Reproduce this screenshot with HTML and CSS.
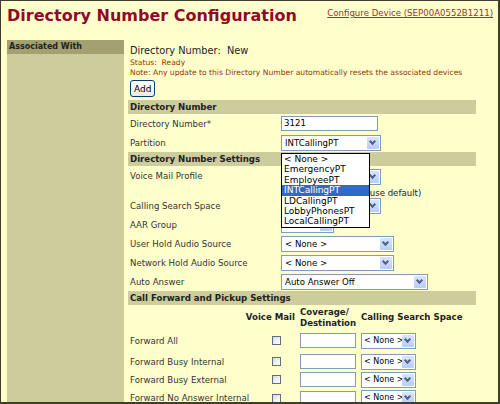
FILE: index.html
```html
<!DOCTYPE html>
<html lang="en">
<head>
    <meta charset="UTF-8">
    <title>Directory Number Configuration</title>
    <link rel="stylesheet" href="styles.css">
</head>
<body>
<div class="frame">
    <div class="top">
        <h1>Directory Number Configuration</h1>
        <a class="device-link" href="#">Configure Device (SEP00A0552B1211)</a>
    </div>
    <div class="layout">
        <div class="side">
            <div class="side-head">Associated With</div>
        </div>
        <div class="main">
            <div class="dn-title">Directory Number:&nbsp; New</div>
            <div class="status">Status:&nbsp; Ready</div>
            <div class="status">Note: Any update to this Directory Number automatically resets the associated devices</div>
            <button class="add">Add</button>

            <div class="section">Directory Number</div>
            <div class="row">
                <span class="label">Directory Number*</span>
                <span class="text-box w97">3121</span>
            </div>
            <div class="row">
                <span class="label">Partition</span>
                <span class="select w100">INTCallingPT<i class="arrow"></i></span>
            </div>

            <div class="section">Directory Number Settings</div>
            <div class="row tall">
                <span class="label">Voice Mail Profile</span>
                <span class="field-stack">
                    <span class="select w100">&lt; None &gt;<i class="arrow"></i></span>
                    <span class="hint">(Choose &lt;None&gt; to use default)</span>
                </span>
            </div>
            <div class="row">
                <span class="label">Calling Search Space</span>
                <span class="select w100">&lt; None &gt;<i class="arrow"></i></span>
            </div>
            <div class="row">
                <span class="label">AAR Group</span>
                <span class="select w53">&lt; None &gt;<i class="arrow"></i></span>
            </div>
            <div class="row">
                <span class="label">User Hold Audio Source</span>
                <span class="select w113">&lt; None &gt;<i class="arrow"></i></span>
            </div>
            <div class="row">
                <span class="label">Network Hold Audio Source</span>
                <span class="select w113">&lt; None &gt;<i class="arrow"></i></span>
            </div>
            <div class="row">
                <span class="label">Auto Answer</span>
                <span class="select w147">Auto Answer Off<i class="arrow"></i></span>
            </div>

            <div class="section">Call Forward and Pickup Settings</div>
            <div class="fwd-grid">
                <span></span>
                <span class="col-head vm">Voice Mail</span>
                <span class="col-head">Coverage/<br>Destination</span>
                <span class="col-head css">Calling Search Space</span>

                <span class="label">Forward All</span>
                <span class="check"></span>
                <span class="text-box w56"></span>
                <span class="select w54 small">&lt; None &gt;<i class="arrow"></i></span>

                <span class="label">Forward Busy Internal</span>
                <span class="check"></span>
                <span class="text-box w56"></span>
                <span class="select w54 small">&lt; None &gt;<i class="arrow"></i></span>

                <span class="label">Forward Busy External</span>
                <span class="check"></span>
                <span class="text-box w56"></span>
                <span class="select w54 small">&lt; None &gt;<i class="arrow"></i></span>

                <span class="label">Forward No Answer Internal</span>
                <span class="check"></span>
                <span class="text-box w56"></span>
                <span class="select w54 small">&lt; None &gt;<i class="arrow"></i></span>
            </div>

            <ul class="dropdown">
                <li>&lt; None &gt;</li>
                <li>EmergencyPT</li>
                <li>EmployeePT</li>
                <li class="picked">INTCallingPT</li>
                <li>LDCallingPT</li>
                <li>LobbyPhonesPT</li>
                <li>LocalCallingPT</li>
            </ul>
        </div>
    </div>
</div>
</body>
</html>
```

FILE: styles.css
```css
html, body {
    margin: 0;
    padding: 0;
}
body {
    width: 500px;
    height: 404px;
    overflow: hidden;
    font-family: "DejaVu Sans", Verdana, sans-serif;
    color: #333;
}
.frame {
    box-sizing: border-box;
    width: 500px;
    height: 404px;
    overflow: hidden;
    background-color: #ffffcc;
    border-style: solid;
    border-color: #3d3d33;
    border-width: 1px 2px 2px 1px;
}
.top {
    display: flex;
    justify-content: space-between;
    align-items: flex-start;
    height: 39px;
    padding: 0 5px 0 6px;
}
h1 {
    margin: 5px 0 0 0;
    font-size: 16px;
    font-weight: bold;
    color: #8f0a2a;
}
.device-link {
    margin-top: 7px;
    font-size: 8.6px;
    color: #993333;
}
.layout {
    display: flex;
    gap: 4px;
    padding-left: 6px;
}
.side {
    width: 117px;
    height: 400px;
    background-color: #cccc9c;
}
.side-head {
    height: 14px;
    line-height: 14px;
    padding-left: 2px;
    background-color: #a3a172;
    font-size: 8px;
    font-weight: bold;
    color: #222;
}
.main {
    position: relative;
    width: 348px;
}
.dn-title {
    margin-top: 3px;
    font-size: 9.8px;
    color: #222;
    padding-left: 2px;
    height: 15px;
    line-height: 15px;
}
.status {
    font-size: 7.6px;
    color: #993300;
    padding-left: 2px;
    line-height: 10px;
}
.add {
    display: block;
    margin: 2px 0 3px 2px;
    padding: 0 3px;
    height: 17px;
    font-family: "DejaVu Sans", Tahoma, sans-serif;
    font-size: 9px;
    color: #000;
    background: linear-gradient(#ffffff, #ecebe4);
    border: 1px solid #003c74;
    border-radius: 3px;
}
.section {
    height: 14px;
    line-height: 14px;
    padding-left: 2px;
    background-color: #cccc9c;
    font-size: 8.6px;
    font-weight: bold;
    color: #222;
}
.row {
    display: flex;
    align-items: center;
    height: 19px;
}
.row.tall {
    height: 30px;
    align-items: flex-start;
}
.row.tall .label {
    margin-top: 5px;
}
.label {
    width: 151px;
    padding-left: 2px;
    font-size: 8.6px;
    color: #333;
}
.field-stack {
    display: flex;
    flex-direction: column;
    gap: 3px;
    margin-top: 3px;
}
.hint {
    font-family: "DejaVu Sans", Tahoma, sans-serif;
    font-size: 8.6px;
    color: #222;
}
.text-box {
    box-sizing: border-box;
    display: inline-block;
    height: 15px;
    line-height: 13px;
    padding-left: 2px;
    background-color: #fff;
    border: 1px solid #7f9db9;
    font-size: 8.6px;
    color: #000;
}
.select {
    box-sizing: border-box;
    position: relative;
    display: inline-block;
    height: 16px;
    line-height: 14px;
    padding-left: 3px;
    background-color: #fff;
    border: 1px solid #7f9db9;
    font-family: "DejaVu Sans", Tahoma, sans-serif;
    font-size: 8.6px;
    color: #000;
    white-space: nowrap;
    overflow: hidden;
}
.select.small {
    font-size: 8px;
    padding-left: 2px;
}
.select .arrow {
    position: absolute;
    right: 1px;
    top: 1px;
    width: 12px;
    height: 12px;
    background: linear-gradient(#d9e5fd, #b6cdf8);
    border-radius: 1px;
}
.select .arrow::after {
    content: "";
    position: absolute;
    left: 3px;
    top: 2px;
    width: 3px;
    height: 3px;
    border-right: 2px solid #4d6185;
    border-bottom: 2px solid #4d6185;
    transform: rotate(45deg);
}
.w97 { width: 97px; }
.w100 { width: 100px; }
.w53 { width: 53px; }
.w113 { width: 113px; }
.w147 { width: 147px; }
.w56 { width: 56px; }
.w54 { width: 55px; }
.fwd-grid {
    display: grid;
    grid-template-columns: 117px 55px 61px auto;
    grid-template-rows: 25px 21px 21px 15px 22px;
    align-items: center;
    justify-items: start;
}
.col-head {
    font-size: 8.6px;
    font-weight: bold;
    color: #222;
    line-height: 11px;
}
.col-head.vm {
    justify-self: end;
    padding-right: 5px;
}
.check {
    box-sizing: border-box;
    justify-self: end;
    margin-right: 19px;
    width: 9px;
    height: 9px;
    border: 1px solid #5a7088;
    background: linear-gradient(135deg, #dcdcd4, #ffffff);
}
.dropdown {
    position: absolute;
    left: 153px;
    top: 113px;
    width: 87px;
    margin: 0;
    padding: 0;
    list-style: none;
    background-color: #fff;
    border: 1px solid #000;
    font-family: "DejaVu Sans", Tahoma, sans-serif;
    font-size: 9px;
    color: #000;
}
.dropdown li {
    height: 10.4px;
    line-height: 10.4px;
    padding-left: 2px;
    white-space: nowrap;
}
.dropdown li.picked {
    background-color: #316ac5;
    color: #fff;
}
```
